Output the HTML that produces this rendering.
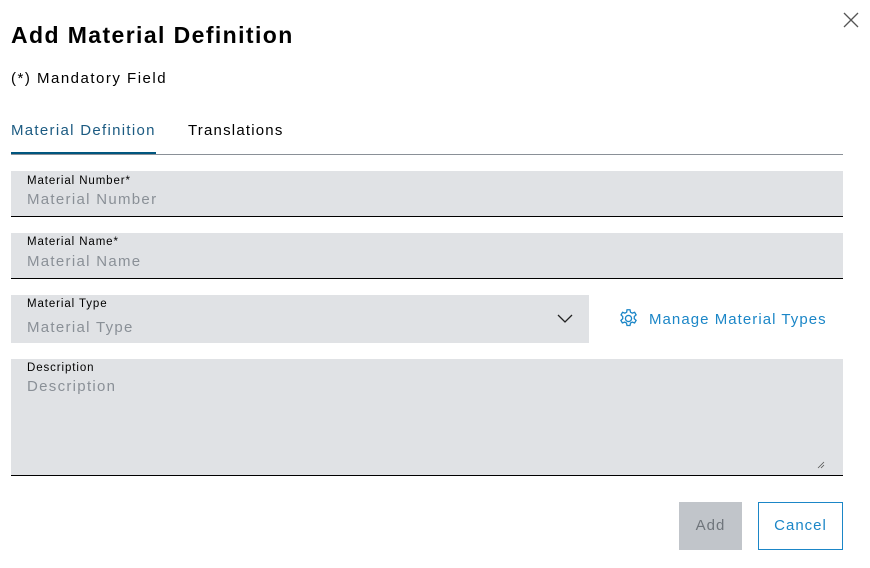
<!DOCTYPE html>
<html><head><style>
*{margin:0;padding:0;box-sizing:border-box}
body{width:870px;height:568px;background:#fff;font-family:"Liberation Sans",sans-serif;position:relative;overflow:hidden;color:#000}
.a{position:absolute}
.f{position:absolute;left:11px;width:832px;background:#e0e2e5}
.lab{position:absolute;left:16px;font-size:11.5px;color:#000;letter-spacing:.9px}
.ph{position:absolute;left:16px;font-size:15px;color:#8a9097;letter-spacing:1.3px}
</style></head><body>
<div class="a" style="left:11px;top:22px;font-size:23px;font-weight:bold;letter-spacing:1.4px">Add Material Definition</div>
<svg class="a" style="left:843px;top:12px" width="16" height="16" viewBox="0 0 16 16"><path d="M1 1L15 15M15 1L1 15" stroke="#555" stroke-width="1.3" fill="none"/></svg>
<div class="a" style="left:11px;top:70px;font-size:15px;letter-spacing:1.5px">(*) Mandatory Field</div>
<div class="a" style="left:11px;top:122px;font-size:15px;color:#1c5b82;letter-spacing:1.3px">Material Definition</div>
<div class="a" style="left:188px;top:122px;font-size:15px;letter-spacing:1.2px">Translations</div>
<div class="a" style="left:11px;top:154px;width:832px;height:1px;background:#8a9097"></div>
<div class="a" style="left:11px;top:152px;width:145px;height:2px;background:#00567f"></div>

<div class="f" style="top:171px;height:46px;border-bottom:1px solid #000"><div class="lab" style="top:4px">Material Number*</div><div class="ph" style="top:20px">Material Number</div></div>
<div class="f" style="top:233px;height:46px;border-bottom:1px solid #000"><div class="lab" style="top:3px">Material Name*</div><div class="ph" style="top:20px">Material Name</div></div>
<div class="f" style="top:295px;height:48px;width:578px"><div class="lab" style="top:3px">Material Type</div><div class="ph" style="top:24px">Material Type</div>
<svg class="a" style="left:546px;top:19px" width="16" height="9" viewBox="0 0 16 9"><path d="M1 1L8 8L15 1" stroke="#222" stroke-width="1.3" fill="none"/></svg></div>
<svg class="a" style="left:618px;top:308px" width="21" height="21" viewBox="0 0 24 24" fill="none" stroke="#1b86c7" stroke-width="1.5"><circle cx="12" cy="12" r="3.5"/><path d="M10.3 2h3.4l.6 2.8 2 1.1 2.7-1 1.7 3-2.1 1.9v2.4l2.1 1.9-1.7 3-2.7-1-2 1.1-.6 2.8h-3.4l-.6-2.8-2-1.1-2.7 1-1.7-3 2.1-1.9v-2.4L3.5 7.9l1.7-3 2.7 1 2-1.1z"/></svg>
<div class="a" style="left:649px;top:311px;font-size:15px;color:#1b86c7;letter-spacing:1.05px">Manage Material Types</div>
<div class="f" style="top:359px;height:117px;border-bottom:1px solid #000"><div class="lab" style="top:3px">Description</div><div class="ph" style="top:19px">Description</div>
<svg class="a" style="left:806px;top:102px" width="8" height="8" viewBox="0 0 8 8"><path d="M1 7L7 1M4 7L7 4" stroke="#555" stroke-width="0.8"/></svg></div>
<div class="a" style="left:679px;top:502px;width:63px;height:48px;background:#c1c5ca;color:#6f757b;font-size:15px;text-align:center;line-height:48px;letter-spacing:1px">Add</div>
<div class="a" style="left:758px;top:502px;width:85px;height:48px;border:1px solid #1b86c7;color:#1b86c7;font-size:15px;text-align:center;line-height:46px;letter-spacing:1px">Cancel</div>
</body></html>
